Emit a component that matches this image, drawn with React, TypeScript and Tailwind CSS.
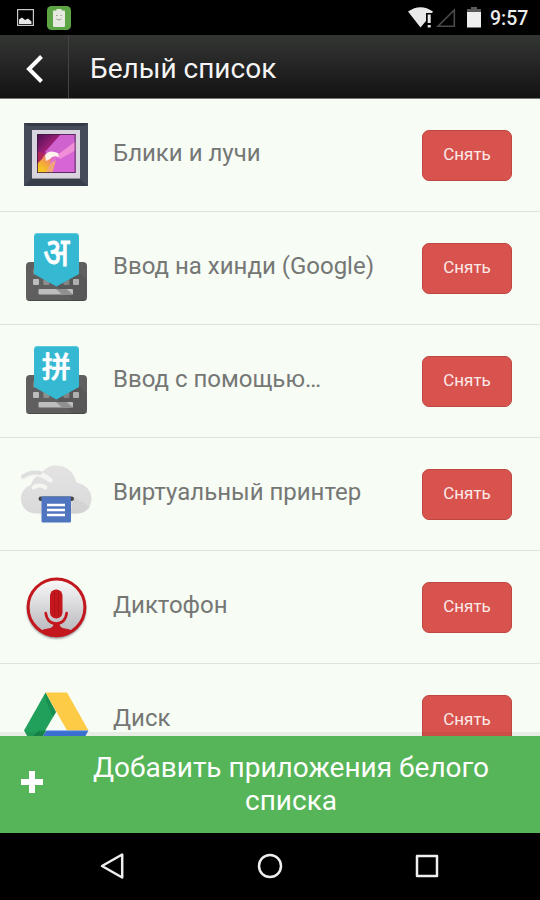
import type { ReactNode } from 'react';

interface AppItem {
    id: string;
    name: string;
    icon: ReactNode;
}

// ── App icons (all share a 72x72 box) ─────────────────────────────────────────
function GalleryIcon() {
    return (
        <svg viewBox="0 0 72 72" className="w-full h-full">
            <defs>
                <linearGradient id="photo" x1="0" y1="0" x2="1" y2="1">
                    <stop offset="0" stopColor="#48104f" />
                    <stop offset="0.32" stopColor="#a01f78" />
                    <stop offset="0.55" stopColor="#e878d0" />
                    <stop offset="1" stopColor="#c253cf" />
                </linearGradient>
                <linearGradient id="flame" x1="0" y1="1" x2="0.5" y2="0">
                    <stop offset="0" stopColor="#f6e01c" />
                    <stop offset="0.55" stopColor="#f5b62c" />
                    <stop offset="1" stopColor="#f2876a" />
                </linearGradient>
                <filter id="soft"><feGaussianBlur stdDeviation="0.7" /></filter>
                <clipPath id="photoClip"><rect x="17" y="15" width="38.5" height="39" /></clipPath>
            </defs>
            <rect x="4" y="4" width="64" height="63" fill="#454b58" />
            <path d="M4 4h64l-4 3H8z" fill="#353a46" />
            <path d="M4 67h64l-9-8H12z" fill="#383e4a" />
            <rect x="12" y="11" width="48" height="48" fill="#d9d5df" />
            <path d="M12 59h48v1H12z" fill="#8f8f9a" />
            <g clipPath="url(#photoClip)">
                <rect x="17" y="15" width="39" height="39" fill="url(#photo)" />
                <g filter="url(#soft)">
                    <path d="M41 15h15v17L32 38l-7-5z" fill="#cf62cf" />
                    <path d="M28 56l4-12 7-8 18-8v28z" fill="#d765d6" />
                    <path d="M36 37l20-15v9L40 40z" fill="#f08fd8" />
                    <path d="M15 44l8-8 8 2-1 8-3 10H15z" fill="url(#flame)" />
                    <path d="M17 32l8 3-3 5-5 5z" fill="#b0285a" />
                    <path d="M25 36q4-6 13-2l1 4q-6-2-9 2l-4 2z" fill="#fff3ee" />
                    <path d="M26 55q1-9 10-14l-4 14z" fill="#f0a878" />
                </g>
                <path d="M17 15h38.500v39H17z" fill="none" stroke="#3a1840" strokeWidth="1.600" />
            </g>
        </svg>
    );
}

function KeyboardIcon({ children }: { children: ReactNode }) {
    return (
        <svg viewBox="0 0 72 72" className="w-full h-full overflow-visible">
            <rect x="6" y="30" width="61" height="38.500" rx="4" fill="#5f5f5f" />
            <path d="M6 65q0 3 4 3h53q4 0 4-3v1q0 3-4 3H10q-4 0-4-3z" fill="#484848" />
            {[13, 23.3, 33.6, 43.4, 53].map(x => (
                <g key={x} fill={x === 13 || x === 53 ? '#bdbdbd' : '#8d8d8d'}>
                    <rect x={x} y="36.500" width="6" height="6" rx="1" fill="#858585" />
                    <rect x={x} y="47" width="6" height="6" rx="1" />
                </g>
            ))}
            <path d="M46 62l-10-8 22-14 9 8v17q0 3-4 3.500H53z" fill="#000" opacity="0.07" />
            <rect x="18.500" y="57" width="34.500" height="5.500" rx="1" fill="#bdbdbd" />
            <path d="M36 57h10.500l6.500 5.500H42z" fill="#909090" />
            <path d="M18 1h37q4 0 4 4v37L36.500 54.500 14 42V5q0-4 4-4z" fill="#35b9d2" />
            <path d="M18 1h37q4 0 4 4v1q0-4-4-4H18q-4 0-4 4V5q0-4 4-4z" fill="#5fcbdf" />
            {children}
        </svg>
    );
}

function HindiIcon() {
    return (
        <KeyboardIcon>
            <text
                x="36.300"
                y="29"
                textAnchor="middle"
                fill="#fff"
                transform="scale(1 1.180)"
                className="font-['Noto_Sans',sans-serif] text-[34px] font-normal"
                stroke="#fff"
                strokeWidth="0.700"
            >
                अ
            </text>
        </KeyboardIcon>
    );
}

function PinyinIcon() {
    return (
        <KeyboardIcon>
            <text
                x="36.300"
                y="32.500"
                textAnchor="middle"
                fill="#fff"
                className="font-['Noto_Sans_CJK_SC',sans-serif] text-[29px] font-medium"
                stroke="#fff"
                strokeWidth="0.600"
            >
                拼
            </text>
        </KeyboardIcon>
    );
}

function PrinterIcon() {
    return (
        <svg viewBox="0 0 72 72" className="w-full h-full">
            <defs>
                <linearGradient id="cloud" x1="0" y1="0" x2="0" y2="1">
                    <stop offset="0" stopColor="#e3e3e3" />
                    <stop offset="1" stopColor="#dadada" />
                </linearGradient>
            </defs>
            <path d="M15 55.500C6.500 55 1 48.500 1 41c0-7 4-12 10-14 1-5 5-9 9-11C25 10 30 7.500 36 7.500c10 0 18 6 20.500 17C66 26.500 71.500 33 71.500 40.500c0 8-6 14.500-14 15z" fill="url(#cloud)" />
            <path d="M54 39l3 2 13 8q-4 6-12 6.500h-7z" fill="#cdcdcd" opacity="0.6" />
            <path d="M3 20.500Q17 10.500 30 22" fill="none" stroke="#f4f6f2" strokeWidth="5" strokeLinecap="round" />
            <path d="M3 18.500Q11 12.800 20 15" fill="none" stroke="#dedede" strokeWidth="4" strokeLinecap="round" />
            <path d="M13.500 29.500q6-4 12 0" fill="none" stroke="#f4f6f2" strokeWidth="4" strokeLinecap="round" />
            <rect x="18.500" y="38.500" width="35.500" height="4.500" rx="2.200" fill="#474747" />
            <path d="M21.500 38.500H51V63q0 1.500-1.500 1.500H23q-1.500 0-1.500-1.500z" fill="#4f74c0" />
            <path d="M27 47h18M27 52h18M27 57h18" stroke="#fff" strokeWidth="2.300" />
        </svg>
    );
}

function RecorderIcon() {
    return (
        <svg viewBox="0 0 72 72" className="w-full h-full">
            <defs>
                <linearGradient id="disc" x1="0" y1="0" x2="0" y2="1">
                    <stop offset="0" stopColor="#fafafa" />
                    <stop offset="1" stopColor="#b4b4ba" />
                </linearGradient>
                <clipPath id="discClip"><circle cx="36.500" cy="36.300" r="28" /></clipPath>
                <filter id="shadow"><feGaussianBlur stdDeviation="1.200" /></filter>
            </defs>
            <circle cx="36.500" cy="38" r="29.500" fill="#666" opacity="0.8" filter="url(#shadow)" />
            <circle cx="36.500" cy="36.300" r="28.400" fill="url(#disc)" stroke="#c4161d" strokeWidth="3" />
            <g clipPath="url(#discClip)">
                <path d="M15 65q5-7 13-7.500 5-.5 5.500-4.500h6q.5 4 5.500 4.500 8 .5 13 7.500z" fill="#c4161d" />
            </g>
            <rect x="30" y="18.500" width="12.500" height="29" rx="6.200" fill="#c4161d" />
            <path d="M34.500 21v24M38.500 21v24" stroke="#b01218" strokeWidth="1" />
            <path d="M25.700 42q1.500 10.500 10.500 10.500T46.700 42" fill="none" stroke="#c4161d" strokeWidth="2.600" strokeLinecap="round" />
        </svg>
    );
}

function DriveIcon() {
    return (
        <svg viewBox="0 0 72 72" className="w-full h-full">
            <path d="M25.500 8.500L4 46.500 14.500 65 36 28z" fill="#21a05c" />
            <path d="M25.500 8.500L36 28l-3 5-7-16z" fill="#12834a" opacity="0.6" />
            <path d="M25.500 8.500H47l21.500 38H47z" fill="#fdcb45" />
            <path d="M26.500 46.500h42L58 65H15z" fill="#3f76dc" />
            <path d="M26.500 46.500L14.500 65 9 55.500l10-9z" fill="#178a4c" />
        </svg>
    );
}

const APPS: AppItem[] = [
    { id: 'gallery', name: 'Блики и лучи', icon: <GalleryIcon /> },
    { id: 'hindi', name: 'Ввод на хинди (Google)', icon: <HindiIcon /> },
    { id: 'pinyin', name: 'Ввод с помощью…', icon: <PinyinIcon /> },
    { id: 'printer', name: 'Виртуальный принтер', icon: <PrinterIcon /> },
    { id: 'recorder', name: 'Диктофон', icon: <RecorderIcon /> },
    { id: 'drive', name: 'Диск', icon: <DriveIcon /> },
];

function StatusBar() {
    return (
        <div className="h-[35px] shrink-0 flex items-center bg-black pl-[17px] pr-[11px]">
            <svg viewBox="0 0 17 17" className="w-[17px] h-[17px]">
                <rect x="0.600" y="0.600" width="15.800" height="15.800" fill="none" stroke="#c9c9c9" strokeWidth="1.200" />
                <path d="M2 15v-4.500L5 8.500l3 2.500 3-1.500 3.500 3V15z" fill="#e6e6e6" />
            </svg>
            <svg viewBox="0 0 24 24" className="w-6 h-6 ml-[13px]">
                <rect width="24" height="24" rx="4.500" fill="#5ba545" />
                <path d="M9.500 3h5v1.500H17q1 0 1 1V20q0 1-1 1H7q-1 0-1-1V5.500q0-1 1-1h2.500z" fill="#e5e9df" />
                <path d="M9 9.500h1.500M13.500 9.500H15M9.500 13q2.500 2 5 0" fill="none" stroke="#8a9583" strokeWidth="0.900" />
            </svg>
            <div className="flex-1" />
            <svg viewBox="0 0 25 21" className="w-[25px] h-[21px]">
                <path d="M0 4.500Q12.500-4 25 4.500L24 6H18v8l-5.500 6.500z" fill="#e8e8e8" />
                <path d="M19.700 7.500h3V16h-3zM19.700 18h3v2.500h-3z" fill="#e8e8e8" />
            </svg>
            <svg viewBox="0 0 20 20" className="w-5 h-5 ml-[3px]">
                <path d="M18.300 2v16.300H2z" fill="none" stroke="#4a4a4a" strokeWidth="1.600" />
            </svg>
            <svg viewBox="0 0 14 21" className="w-[14px] h-[21px] ml-[11px]">
                <path d="M4 0h6v2h4v3H0V2h4z" fill="#5a5a5a" />
                <path d="M0 5h14v15.500H0z" fill="#efefef" />
            </svg>
            <span className="ml-[9px] mt-0.5 w-[39px] whitespace-nowrap text-[19.5px] leading-none font-medium text-[#ececec]">9:57</span>
        </div>
    );
}

function Header() {
    return (
        <header className="h-16 shrink-0 flex items-center bg-linear-to-b from-[#343634] to-[#131313] border-b border-[#777]">
            <button className="w-[69px] h-full flex items-center justify-center border-r border-[#444]">
                <svg viewBox="0 0 18 28" className="w-[18px] h-7 mt-[5px] ml-px">
                    <path d="M15.500 1.500L3 14l12.500 12.500" fill="none" stroke="#fff" strokeWidth="4" />
                </svg>
            </button>
            <h1 className="ml-[21px] mt-[5px] text-[28px] leading-8 text-[#f5f5f5]">Белый список</h1>
        </header>
    );
}

function AppRow({ item }: { item: AppItem }) {
    return (
        <li className="h-[113px] shrink-0 flex items-center pl-5 pr-7 border-b border-[#dfe3dc]">
            <div className="w-[72px] h-[72px] shrink-0">{item.icon}</div>
            <span className="ml-[21px] flex-1 pb-[5px] text-[24px] leading-8 text-[#757775] whitespace-nowrap">{item.name}</span>
            <button className="w-[90px] h-[51px] rounded-[7px] border border-[#bf4742] bg-[#d8534e] text-[17px] text-[#fbe9e7] shrink-0">
                Снять
            </button>
        </li>
    );
}

function NavBar() {
    return (
        <nav className="h-[67px] shrink-0 flex items-center justify-between bg-black px-[100px]">
            <svg viewBox="0 0 26 28" className="w-[26px] h-7 mb-0.5" fill="none" stroke="#efefef" strokeWidth="2.500" strokeLinejoin="round">
                <path d="M22.200 2.500v23L2 14z" />
            </svg>
            <svg viewBox="0 0 26 26" className="w-[26px] h-[26px] mb-0.5" fill="none" stroke="#efefef" strokeWidth="2.500">
                <circle cx="13" cy="13" r="11" />
            </svg>
            <svg viewBox="0 0 26 26" className="w-[26px] h-[26px] mb-0.5" fill="none" stroke="#efefef" strokeWidth="2.500" strokeLinejoin="round">
                <rect x="3" y="3" width="20" height="20" />
            </svg>
        </nav>
    );
}

export default function App() {
    return (
        <div className="w-[540px] h-[900px] flex flex-col overflow-hidden bg-[#f7fcf5] font-[Roboto,sans-serif]">
            <StatusBar />
            <Header />
            <div className="relative flex-1 min-h-0 overflow-hidden">
                <ul className="flex flex-col">
                    {APPS.map(item => <AppRow key={item.id} item={item} />)}
                </ul>
                {/* shade above the bottom action */}
                <div className="absolute inset-x-0 bottom-0 h-1 bg-black/6" />
            </div>
            <button className="h-[97px] shrink-0 flex items-center bg-[#56b558] text-white">
                <svg viewBox="0 0 22 22" className="w-[22px] h-[22px] ml-[21px] mb-1.5">
                    <path d="M8 0h6v8h8v6h-8v8H8v-8H0V8h8z" fill="#fff" />
                </svg>
                <span className="ml-10 mb-0.5 w-[416px] text-center text-[28px] leading-[33px]">Добавить приложения белого списка</span>
            </button>
            <NavBar />
        </div>
    );
}
